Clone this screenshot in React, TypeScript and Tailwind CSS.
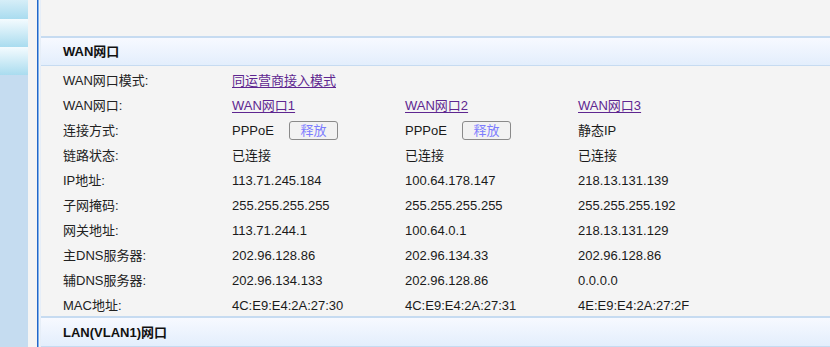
import React from 'react';

type Cell = { text: string; link?: boolean; release?: boolean };

const rows: { label: string; cells: Cell[] }[] = [
  { label: 'WAN网口模式:', cells: [{ text: '同运营商接入模式', link: true }] },
  {
    label: 'WAN网口:',
    cells: [
      { text: 'WAN网口1', link: true },
      { text: 'WAN网口2', link: true },
      { text: 'WAN网口3', link: true },
    ],
  },
  {
    label: '连接方式:',
    cells: [{ text: 'PPPoE', release: true }, { text: 'PPPoE', release: true }, { text: '静态IP' }],
  },
  { label: '链路状态:', cells: [{ text: '已连接' }, { text: '已连接' }, { text: '已连接' }] },
  { label: 'IP地址:', cells: [{ text: '113.71.245.184' }, { text: '100.64.178.147' }, { text: '218.13.131.139' }] },
  { label: '子网掩码:', cells: [{ text: '255.255.255.255' }, { text: '255.255.255.255' }, { text: '255.255.255.192' }] },
  { label: '网关地址:', cells: [{ text: '113.71.244.1' }, { text: '100.64.0.1' }, { text: '218.13.131.129' }] },
  { label: '主DNS服务器:', cells: [{ text: '202.96.128.86' }, { text: '202.96.134.33' }, { text: '202.96.128.86' }] },
  { label: '辅DNS服务器:', cells: [{ text: '202.96.134.133' }, { text: '202.96.128.86' }, { text: '0.0.0.0' }] },
  { label: 'MAC地址:', cells: [{ text: '4C:E9:E4:2A:27:30' }, { text: '4C:E9:E4:2A:27:31' }, { text: '4E:E9:E4:2A:27:2F' }] },
];

const font = { fontFamily: '"Liberation Sans", "Noto Sans CJK SC", sans-serif' };

const SectionHeader: React.FC<{ title: string }> = ({ title }) => (
  <div className="h-[31px] border-t-2 border-b border-[#c6dbf1] bg-gradient-to-b from-[#f7f9ff] to-[#e3eefc] flex items-center pl-[22px] pt-[1px]">
    <span className="text-[13px] font-bold text-[#111]">{title}</span>
  </div>
);

const App: React.FC = () => {
  return (
    <div className="w-[830px] h-[347px] overflow-hidden bg-[#f4f4f4] flex text-[13px] text-[#1a1a1a]" style={font}>
      <div className="w-[28px] bg-[#c5dcf0] flex flex-col">
        <div className="h-[19px] bg-gradient-to-b from-[#d6eef8] to-[#a9dcef]" />
        <div className="h-[28px] bg-gradient-to-b from-[#f4fbfe] to-[#a9dcef]" />
        <div className="h-[28px] bg-gradient-to-b from-[#f4fbfe] to-[#a9dcef]" />
      </div>
      <div className="w-[9px]" />
      <div className="w-[1px] bg-[#2466c8]" />
      <div className="w-[1px] bg-[#7fb2ec]" />
      <div className="w-[1px]" />
      <div className="flex-1 flex flex-col border-l border-[#e6eef8]">
        <div className="h-[36px]" />
        <SectionHeader title="WAN网口" />
        <div className="flex flex-col">
          {rows.map((r) => (
            <div key={r.label} className="h-[25px] flex items-center pl-[22px] pt-[3px]">
              <div className="w-[169px] text-[#222]">{r.label}</div>
              {r.cells.map((c, i) => (
                <div key={i} className="w-[173px] flex items-center">
                  {c.link ? (
                    <span className="text-[#5e2690] underline underline-offset-[2px]">{c.text}</span>
                  ) : (
                    <span className={c.release ? 'w-[57px]' : ''}>{c.text}</span>
                  )}
                  {c.release && (
                    <span className="w-[49px] h-[19px] rounded-[3px] border border-[#8a8a8a] bg-[#f2f2f2] text-[#7d7dff] text-[13px] flex items-center justify-center">
                      释放
                    </span>
                  )}
                </div>
              ))}
            </div>
          ))}
        </div>
        <SectionHeader title="LAN(VLAN1)网口" />
      </div>
    </div>
  );
};

export default App;
